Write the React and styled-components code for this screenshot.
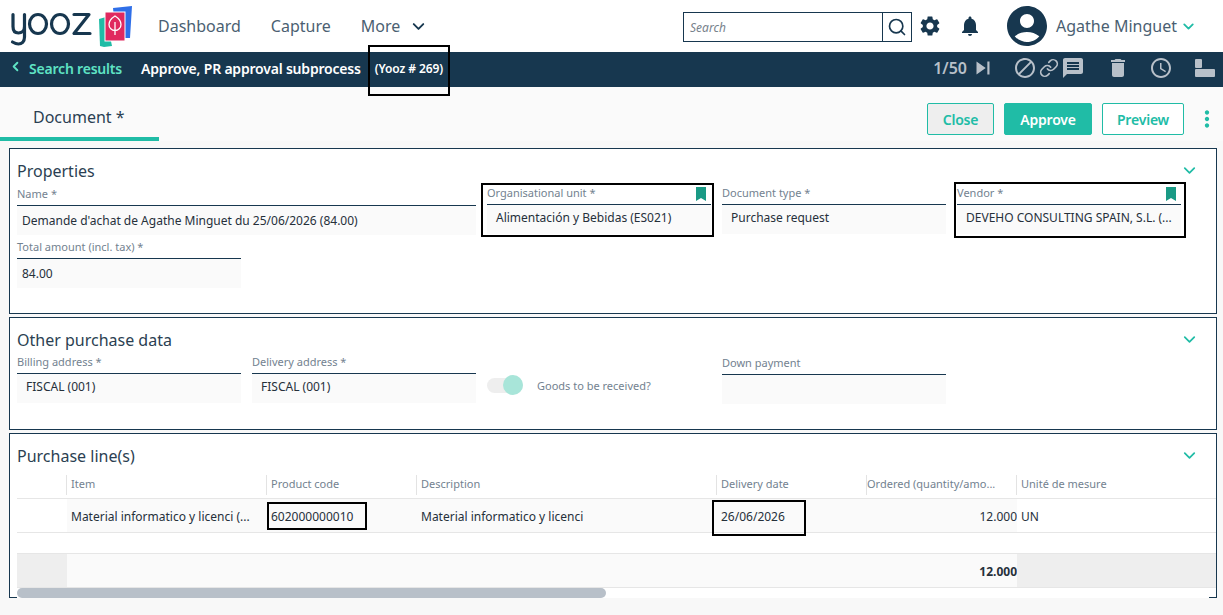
import React from 'react';
import styled, { createGlobalStyle } from 'styled-components';
import { ChevronDown, ChevronLeft, Link as LinkIcon, Search } from 'lucide-react';
import {
  MdAccessTime,
  MdAccountCircle,
  MdBlock,
  MdDelete,
  MdMessage,
  MdMoreVert,
  MdNotifications,
  MdSettings,
  MdSkipNext,
} from 'react-icons/md';

const navy = '#17374f';
const teal = '#20bca6';

const GlobalStyle = createGlobalStyle`
  html, body {
    margin: 0;
    height: 100%;
    overflow: hidden;
    background: #f8f8f8;
    font-family: "Noto Sans", "Open Sans", sans-serif;
    color: #2b3a48;
  }
  * { box-sizing: border-box; }
`;

function Logo() {
  return (
    <LogoSvg viewBox="0 0 122 42" width="122" height="42">
      <polygon points="89,12 96,10 102,39 94,40 90,39" fill="#20bca6" />
      <polygon points="103,1 122,-1 120,31 106,31" fill="#2f6fe8" />
      <rect x="95" y="5" width="20" height="29" fill="#e0295f" stroke="#fff" strokeWidth="1" />
      <path d="M105 9c4 2.500 6 5 6 8.500 0 3.500-2.700 6-6 6s-6-2.500-6-6c0-3.500 2-6 6-8.500zM105 15v13" fill="none" stroke="#fff" strokeWidth="1.300" />
      <g fill="none" stroke="#17374f" strokeWidth="3.200" strokeLinecap="round" strokeLinejoin="round">
        <path d="M3 7.500v12c0 4.500 2.500 6.500 5.500 6.500s6-2 6-6.500v-12M14.500 19v11c0 5-3 7-6 7-2 0-4-.8-6-2" />
        <ellipse cx="28" cy="17" rx="8.500" ry="9.500" />
        <ellipse cx="50" cy="17" rx="8.500" ry="9.500" />
        <path d="M64 7.500h15L64 26.500h16" />
      </g>
    </LogoSvg>
  );
}

function LayoutIcon() {
  return (
    <svg width="20" height="18" viewBox="0 0 20 18">
      <rect x="0" y="0" width="7" height="9" rx="1" fill="#b8c0c9" />
      <rect x="0" y="10" width="20" height="8" rx="1" fill="#b8c0c9" />
    </svg>
  );
}

function Field({ label, value, span, mark, bookmark, tight, drop }) {
  return (
    <FieldBox $span={span} $mark={mark} $drop={drop}>
      <LabelRow>
        <FieldLabel>{label}</FieldLabel>
        {bookmark && (
          <BookmarkSvg width="10" height="14" viewBox="0 0 10 14">
            <path d="M0 0h10v14L5 11 0 14z" fill="#1a9a85" />
          </BookmarkSvg>
        )}
      </LabelRow>
      <FieldValue $tight={tight}>{value}</FieldValue>
    </FieldBox>
  );
}

function App() {
  return (
    <Page>
      <GlobalStyle />
      <TopBar>
        <Logo />
        <Nav>
          <NavItem>Dashboard</NavItem>
          <NavItem>Capture</NavItem>
          <NavItem>
            More
            <ChevronDown size={19} strokeWidth={2.4} color={navy} />
          </NavItem>
        </Nav>
        <TopRight>
          <SearchBox>
            <SearchText>Search</SearchText>
            <SearchButton>
              <Search size={20} strokeWidth={2} color={navy} />
            </SearchButton>
          </SearchBox>
          <MdSettings size={24} color={navy} />
          <BellSlot>
            <MdNotifications size={24} color={navy} />
          </BellSlot>
          <MdAccountCircle size={48} color={navy} />
          <UserName>Agathe Minguet</UserName>
          <ChevronDown size={17} strokeWidth={2.6} color={teal} />
        </TopRight>
      </TopBar>

      <SubBar>
        <BackLink>
          <BackArrow size={15} strokeWidth={3} />
          Search results
        </BackLink>
        <SubTitle>Approve, PR approval subprocess</SubTitle>
        <DocNumber>(Yooz # 269)</DocNumber>
        <SubTools>
          <Pager>1/50</Pager>
          <SkipSlot><MdSkipNext size={26} color="#b8c0c9" /></SkipSlot>
          <MdBlock size={24} color="#b8c0c9" />
          <LinkSlot><LinkIcon size={20} strokeWidth={2} color="#b8c0c9" /></LinkSlot>
          <MdMessage size={24} color="#b8c0c9" />
          <TrashSlot><MdDelete size={24} color="#b8c0c9" /></TrashSlot>
          <ClockSlot><MdAccessTime size={24} color="#b8c0c9" /></ClockSlot>
          <LayoutSlot><LayoutIcon /></LayoutSlot>
        </SubTools>
      </SubBar>

      <TabRow>
        <Tab>Document *</Tab>
        <Actions>
          <ActionButton $kind="close">Close</ActionButton>
          <ActionButton $kind="approve">Approve</ActionButton>
          <ActionButton $kind="preview">Preview</ActionButton>
          <KebabSlot><MdMoreVert size={26} color={teal} /></KebabSlot>
        </Actions>
      </TabRow>

      <Content>
        <Panel $height={166}>
          <PanelHead>
            <PanelTitle>Properties</PanelTitle>
            <PanelChevron size={19} strokeWidth={2.2} />
          </PanelHead>
          <FieldGrid>
            <Field label="Name *" value="Demande d'achat de Agathe Minguet du 25/06/2026 (84.00)" span={2} tight drop />
            <Field label="Organisational unit *" value="Alimentación y Bebidas (ES021)" mark="org" bookmark />
            <Field label="Document type *" value="Purchase request" />
            <Field label="Vendor *" value="DEVEHO CONSULTING SPAIN, S.L. (..." mark="vendor" bookmark />
            <Field label="Total amount (incl. tax) *" value="84.00" tight />
          </FieldGrid>
        </Panel>

        <Panel $height={113}>
          <PanelHead>
            <PanelTitle>Other purchase data</PanelTitle>
            <PanelChevron size={19} strokeWidth={2.2} />
          </PanelHead>
          <FieldGrid>
            <Field label="Billing address *" value="FISCAL (001)" />
            <Field label="Delivery address *" value="FISCAL (001)" />
            <ToggleCell>
              <Toggle />
              <ToggleLabel>Goods to be received?</ToggleLabel>
            </ToggleCell>
            <Field label="Down payment" value="" drop />
          </FieldGrid>
        </Panel>

        <Panel $height={165}>
          <TableHead>
            <PanelTitle>Purchase line(s)</PanelTitle>
            <PanelChevron size={19} strokeWidth={2.2} />
          </TableHead>
          <LineTable>
            <HeadCell $plain />
            <HeadCell>Item</HeadCell>
            <HeadCell>Product code</HeadCell>
            <HeadCell>Description</HeadCell>
            <HeadCell>Delivery date</HeadCell>
            <HeadCell $tight>Ordered (quantity/amo...</HeadCell>
            <HeadCell>Unité de mesure</HeadCell>

            <RowCell $white />
            <RowCell>Material informatico y licenci (...</RowCell>
            <RowCell>
              602000000010
              <CellMark $l={0} $t={3} $w={100} $h={28} />
            </RowCell>
            <RowCell>Material informatico y licenci</RowCell>
            <RowCell>
              26/06/2026
              <CellMark $l={-5} $t={1} $w={94} $h={36} />
            </RowCell>
            <RowCell $right>12.000</RowCell>
            <RowCell $white>UN</RowCell>

            <SpacerRow />

            <FootCell $grey />
            <FootCell />
            <FootCell />
            <FootCell />
            <FootCell />
            <FootCell>12.000</FootCell>
            <FootCell $grey />
          </LineTable>
          <ScrollTrack>
            <ScrollThumb />
          </ScrollTrack>
        </Panel>
      </Content>
    </Page>
  );
}

export default App;

const Page = styled.div`
  height: 615px;
  overflow: hidden;
  position: relative;
`;

const TopBar = styled.header`
  height: 52px;
  background: #fff;
  display: flex;
  align-items: center;
  padding: 0 26px 0 10px;
`;

const LogoSvg = styled.svg`
  flex: none;
  margin-top: 3px;
  overflow: visible;
`;

const Nav = styled.nav`
  display: flex;
  align-items: center;
  gap: 30px;
  margin-left: 26px;
`;

const NavItem = styled.span`
  display: flex;
  align-items: center;
  gap: 9px;
  font-size: 16px;
  color: #4b5f72;
`;

const TopRight = styled.div`
  margin-left: auto;
  display: flex;
  align-items: center;
`;

const SearchBox = styled.div`
  width: 229px;
  height: 30px;
  margin-top: 2px;
  border: 1px solid ${navy};
  display: flex;
  align-items: center;
  margin-right: 6px;
`;

const SearchText = styled.span`
  flex: 1;
  padding-left: 6px;
  font-size: 12px;
  font-style: italic;
  color: #77828c;
`;

const SearchButton = styled.span`
  width: 29px;
  height: 28px;
  border-left: 1px solid ${navy};
  display: flex;
  align-items: center;
  justify-content: center;
`;

const BellSlot = styled.span`
  display: flex;
  margin: 0 21px 0 16px;
`;

const UserName = styled.span`
  font-size: 16px;
  color: #4b5f72;
  margin: 0 3px 0 5px;
`;

const SubBar = styled.div`
  height: 35px;
  background: ${navy};
  display: flex;
  align-items: center;
  padding: 0 0 3px 8px;
`;

const BackLink = styled.span`
  display: flex;
  align-items: center;
  gap: 6px;
  font-size: 14px;
  font-weight: 600;
  letter-spacing: -0.2px;
  color: #5fe3c4;
`;

const BackArrow = styled(ChevronLeft)`
  margin-top: -4px;
`;

const SubTitle = styled.span`
  margin-left: 19px;
  font-size: 14px;
  font-weight: 600;
  letter-spacing: -0.2px;
  color: #fff;
`;

const DocNumber = styled.span`
  margin-left: 14px;
  font-size: 12px;
  font-weight: 600;
  letter-spacing: -0.1px;
  color: #fff;
  position: relative;
  &::after {
    content: '';
    position: absolute;
    left: -7px;
    right: -7px;
    top: -15px;
    bottom: -19px;
    border: 2px solid #000;
  }
`;

const SubTools = styled.div`
  margin-left: auto;
  display: flex;
  align-items: center;
  padding-right: 8px;
`;

const Pager = styled.span`
  font-size: 16px;
  font-weight: 600;
  color: #b8c0c9;
`;

const SkipSlot = styled.span`
  display: flex;
  margin: 0 17px 0 3px;
`;

const LinkSlot = styled.span`
  display: flex;
  margin: 0 2px 0 2px;
`;

const TrashSlot = styled.span`
  display: flex;
  margin-left: 21px;
`;

const ClockSlot = styled.span`
  display: flex;
  margin-left: 19px;
`;

const LayoutSlot = styled.span`
  display: flex;
  margin-left: 22px;
`;

const TabRow = styled.div`
  height: 54px;
  display: flex;
  background: #fafafa;
`;

const Tab = styled.div`
  width: 159px;
  height: 54px;
  padding: 19px 0 0 33px;
  font-size: 16px;
  line-height: 22px;
  color: #2b3f52;
  border-bottom: 4px solid ${teal};
`;

const Actions = styled.div`
  margin-left: auto;
  display: flex;
  align-items: flex-start;
  padding-top: 16px;
  padding-right: 3px;
`;

const ActionButton = styled.button`
  height: 32px;
  padding: 0;
  border-radius: 2px;
  border: 1px solid ${teal};
  font-family: inherit;
  font-size: 14px;
  font-weight: 600;
  letter-spacing: -0.2px;
  width: ${(p) => ({ close: 67, approve: 88, preview: 82 }[p.$kind])}px;
  margin-right: 10px;
  background: ${(p) => ({ close: '#eeeeee', approve: teal, preview: '#fff' }[p.$kind])};
  color: ${(p) => (p.$kind === 'approve' ? '#fff' : teal)};
`;

const KebabSlot = styled.span`
  display: flex;
  margin-top: 3px;
`;

const Content = styled.main`
  padding: 7px 6px 0 9px;
  display: flex;
  flex-direction: column;
  gap: 3px;
`;

const Panel = styled.section`
  height: ${(p) => p.$height}px;
  background: #fff;
  border: 1px solid ${navy};
  padding: 0 0 0 7px;
  display: flex;
  flex-direction: column;
`;

const PanelHead = styled.div`
  height: 36px;
  padding: 8px 17px 0 0;
  display: flex;
  justify-content: space-between;
  align-items: center;
`;

const TableHead = styled(PanelHead)`
  height: 38px;
  padding-top: 6px;
`;

const PanelTitle = styled.h2`
  margin: 0;
  font-size: 16px;
  line-height: 22px;
  font-weight: 400;
  color: #2b3f52;
`;

const PanelChevron = styled(ChevronDown)`
  color: ${teal};
  margin-top: -2px;
`;

const FieldGrid = styled.div`
  display: grid;
  grid-template-columns: repeat(5, 224px);
  column-gap: 11px;
  row-gap: 5px;
`;

const markOffsets = {
  org: 'left: -6px; right: -3px; top: -2px; bottom: -3px;',
  vendor: 'left: -3px; right: -5px; top: -3px; bottom: -4px;',
};

const FieldBox = styled.div`
  grid-column: span ${(p) => p.$span || 1};
  position: relative;
  ${(p) => p.$drop && 'margin: 1px 0 -1px;'}
  ${(p) => p.$mark && `
    &::after {
      content: '';
      position: absolute;
      ${markOffsets[p.$mark]}
      border: 2px solid #000;
      pointer-events: none;
    }
  `}
`;

const LabelRow = styled.div`
  height: 20px;
  border-bottom: 1px solid ${navy};
  display: flex;
  align-items: center;
  justify-content: space-between;
  padding: 0 5px 4px 0;
`;

const BookmarkSvg = styled.svg`
  align-self: flex-start;
  margin-top: 2px;
`;

const FieldLabel = styled.span`
  font-size: 11px;
  line-height: 16px;
  color: #738290;
`;

const FieldValue = styled.div`
  height: 29px;
  line-height: ${(p) => (p.$tight ? 29 : 25)}px;
  background: #fafafa;
  padding-left: ${(p) => (p.$tight ? 5 : 9)}px;
  font-size: 12px;
  color: #26303a;
  white-space: nowrap;
  overflow: hidden;
`;

const ToggleCell = styled.div`
  display: flex;
  align-items: center;
  gap: 14px;
  height: 50px;
  padding-top: 12px;
`;

const Toggle = styled.span`
  width: 36px;
  height: 15px;
  border-radius: 8px;
  background: #eeeeee;
  position: relative;
  &::after {
    content: '';
    position: absolute;
    right: 0;
    top: -3px;
    width: 20px;
    height: 20px;
    border-radius: 50%;
    background: #a8e5d9;
  }
`;

const ToggleLabel = styled.span`
  font-size: 11px;
  color: #738290;
`;

const LineTable = styled.div`
  display: grid;
  grid-template-columns: 50px 200px 150px 300px 150px 150px 1fr;
  grid-template-rows: 27px 34px 21px 34px;
`;

const HeadCell = styled.div`
  font-size: 11px;
  color: #738290;
  border-bottom: 1px solid #e6e6e6;
  display: flex;
  align-items: center;
  padding-left: ${(p) => (p.$tight ? 0 : 4)}px;
  padding-bottom: 4px;
  position: relative;
  white-space: nowrap;
  ${(p) => !p.$plain && `
    &::before {
      content: '';
      position: absolute;
      left: -1px;
      top: 3px;
      height: 20px;
      width: 1px;
      background: #e3e3e3;
    }
  `}
`;

const RowCell = styled.div`
  background: ${(p) => (p.$white ? '#fff' : '#fafafa')};
  border-bottom: 1px solid #e6e6e6;
  font-size: 12px;
  color: #26303a;
  display: flex;
  align-items: center;
  justify-content: ${(p) => (p.$right ? 'flex-end' : 'flex-start')};
  padding: 2px 0 0 ${(p) => (p.$right ? 0 : 4)}px;
  white-space: nowrap;
  position: relative;
`;

const CellMark = styled.span`
  position: absolute;
  left: ${(p) => p.$l}px;
  top: ${(p) => p.$t}px;
  width: ${(p) => p.$w}px;
  height: ${(p) => p.$h}px;
  border: 2px solid #000;
`;

const SpacerRow = styled.div`
  grid-column: 1 / -1;
  border-bottom: 1px solid #e6e6e6;
`;

const FootCell = styled.div`
  background: ${(p) => (p.$grey ? '#eeeeee' : '#fafafa')};
  border-bottom: 1px solid #e6e6e6;
  font-size: 12px;
  font-weight: 700;
  color: #26303a;
  display: flex;
  align-items: center;
  justify-content: flex-end;
  padding-top: 2px;
`;

const ScrollTrack = styled.div`
  height: 10px;
  margin: 0 7px -2px 0;
  background: #fff;
  position: relative;
`;

const ScrollThumb = styled.div`
  width: 589px;
  height: 10px;
  border-radius: 5px;
  background: #b8c0c9;
`;
